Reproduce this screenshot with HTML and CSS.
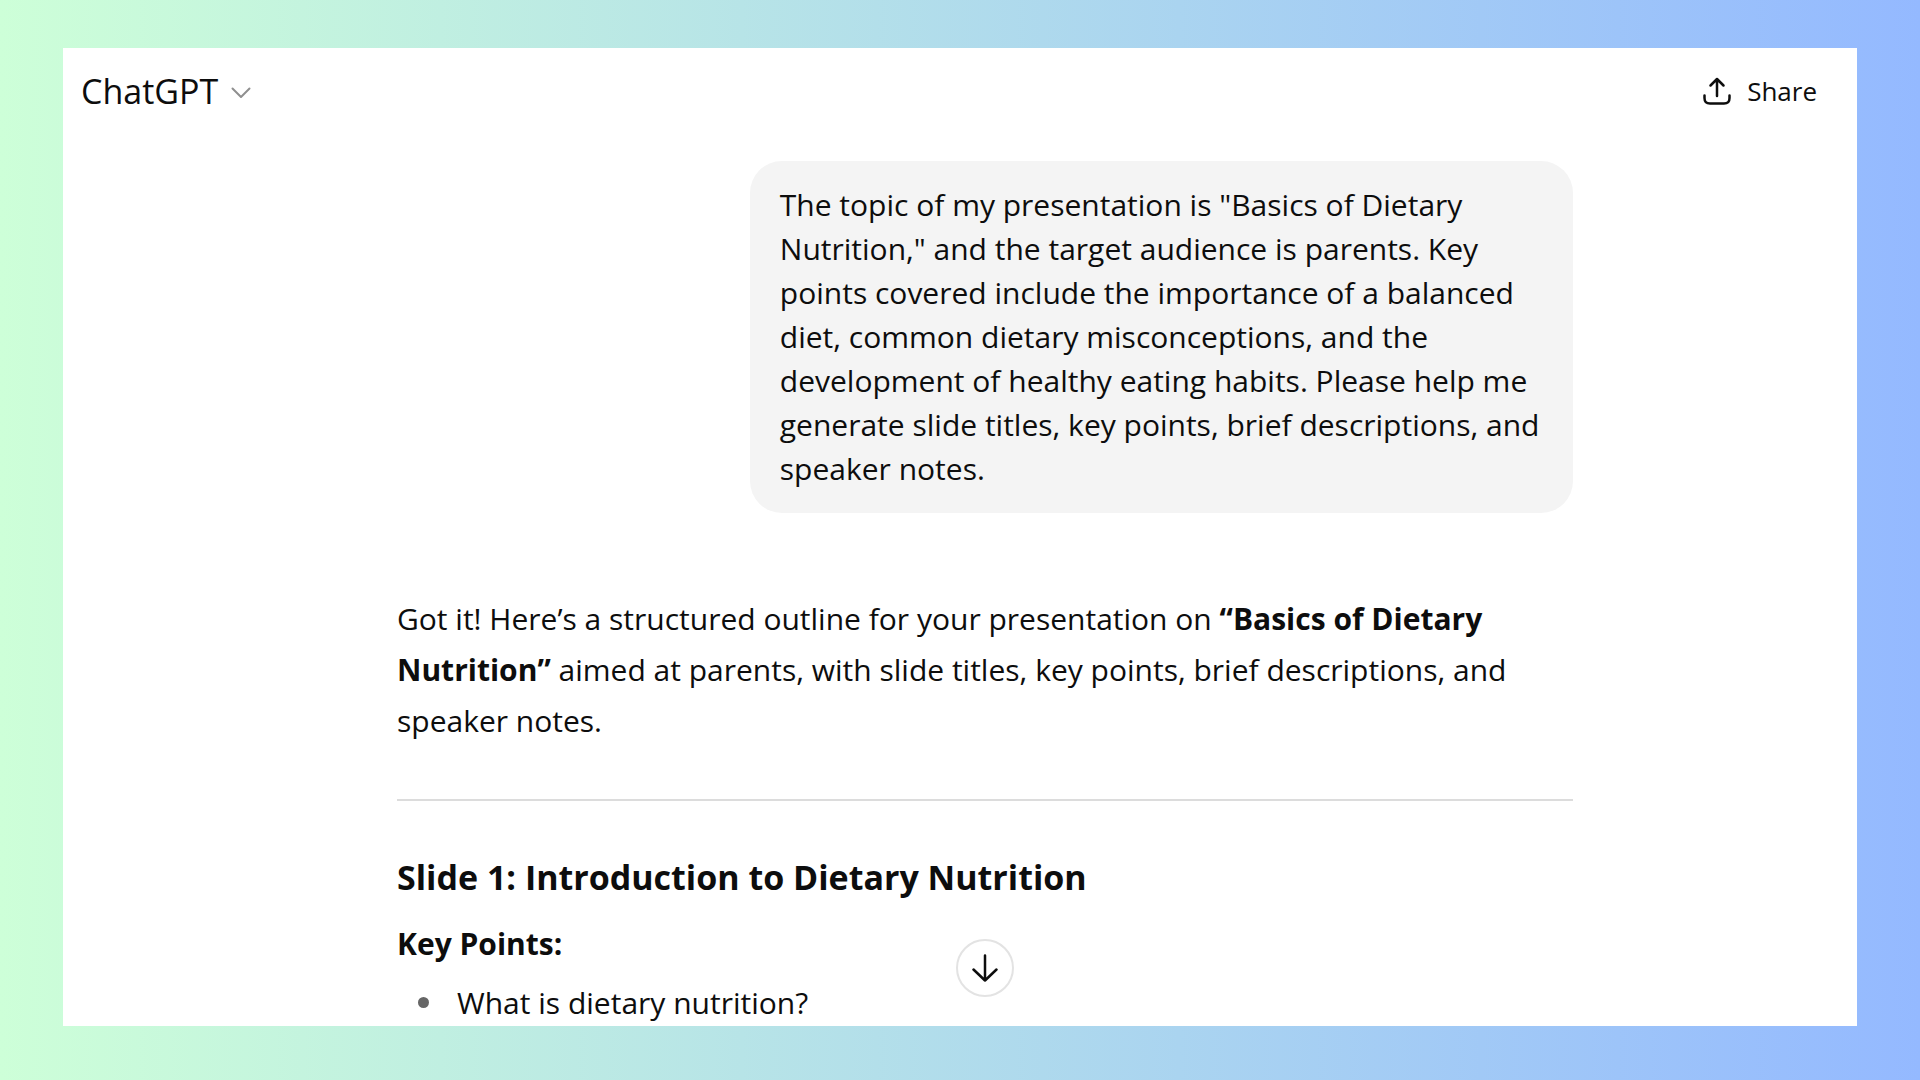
FILE: index.html
```
<!DOCTYPE html>
<html lang="en">
<head>
    <meta charset="UTF-8">
    <meta name="viewport" content="width=device-width, initial-scale=1.0">
    <title>ChatGPT</title>
    <link rel="stylesheet" href="styles.css">
</head>
<body>
    <div class="chat-window">
        <header class="chat-header">
            <button class="model-button" type="button">
                ChatGPT
                <svg class="chevron" viewBox="0 0 20 12" aria-hidden="true">
                    <path d="M1.5 1.5 L10 10 L18.5 1.5"/>
                </svg>
            </button>
            <button class="share-button" type="button">
                <svg class="share-icon" viewBox="0 0 28 28" aria-hidden="true">
                    <path d="M14 19 V2 M7.5 8.5 L14 2 L20.5 8.5"/>
                    <path d="M1.5 18.5 V21 C1.5 25 3 26.5 7 26.5 H21 C25 26.5 26.5 25 26.5 21 V18.5"/>
                </svg>
                Share
            </button>
        </header>

        <main class="conversation">
            <div class="thread">
                <div class="user-message">
                    The topic of my presentation is "Basics of Dietary Nutrition," and the target audience is parents. Key points covered include the importance of a balanced diet, common dietary misconceptions, and the development of healthy eating habits. Please help me generate slide titles, key points, brief descriptions, and speaker notes.
                </div>

                <article class="assistant-message">
                    <p>Got it! Here’s a structured outline for your presentation on <strong>“Basics of Dietary Nutrition”</strong> aimed at parents, with slide titles, key points, brief descriptions, and speaker notes.</p>
                    <hr>
                    <h3>Slide 1: Introduction to Dietary Nutrition</h3>
                    <h4>Key Points:</h4>
                    <ul>
                        <li>What is dietary nutrition?</li>
                    </ul>
                </article>
            </div>

            <button class="scroll-button" type="button" aria-label="Scroll to bottom">
                <svg viewBox="0 0 28 28" aria-hidden="true">
                    <path d="M14 1.5 V26.5 M2.5 15.5 L14 26.5 L25.5 15.5"/>
                </svg>
            </button>
        </main>
    </div>
</body>
</html>
```
FILE: styles.css
```
* {
    box-sizing: border-box;
    margin: 0;
    padding: 0;
}

body {
    height: 100vh;
    padding: 48px 63px 54px;
    background: linear-gradient(90deg, #cdffd8, #94b9ff);
    font-family: "Segoe UI", "Open Sans", sans-serif;
    font-size: 30px;
    color: #0d0d0d;
}

button {
    display: flex;
    align-items: center;
    border: none;
    background: none;
    font-family: inherit;
    color: inherit;
    cursor: pointer;
}

svg {
    fill: none;
    stroke: currentColor;
    stroke-linecap: round;
    stroke-linejoin: round;
}

.chat-window {
    display: flex;
    flex-direction: column;
    height: 100%;
    background: white;
    overflow: hidden;
}

/* Header */

.chat-header {
    display: flex;
    align-items: center;
    justify-content: space-between;
    height: 86px;
    padding: 0 40px 0 18px;
    flex-shrink: 0;
}

.model-button {
    gap: 13px;
    font-size: 34px;
}

.chevron {
    width: 20px;
    height: 12px;
    margin-top: 4px;
    stroke: #8f8f8f;
    stroke-width: 2;
}

.share-button {
    gap: 16px;
    font-size: 26px;
}

.share-icon {
    width: 28px;
    height: 28px;
    stroke-width: 2.5;
}

/* Conversation */

.conversation {
    position: relative;
    flex: 1;
    min-height: 0;
    padding: 27px 0 0 50px;
    overflow: hidden;
}

.thread {
    display: flex;
    flex-direction: column;
    gap: 80px;
    max-width: 1176px;
    margin: 0 auto;
}

.user-message {
    align-self: flex-end;
    max-width: 70%;
    padding: 22px 30px;
    border-radius: 32px;
    background: #f4f4f4;
    line-height: 44px;
}

.assistant-message {
    line-height: 51px;
}

.assistant-message hr {
    margin: 53px 0 51px;
    border: none;
    border-top: 2px solid #dcdcdc;
}

.assistant-message h3 {
    margin-bottom: 15px;
    font-size: 34px;
}

.assistant-message h4 {
    margin-bottom: 8px;
    font-size: 30px;
}

.assistant-message ul {
    list-style: none;
}

.assistant-message li {
    display: flex;
    align-items: center;
    gap: 28px;
    padding-left: 21px;
}

.assistant-message li::before {
    content: "";
    width: 11px;
    height: 11px;
    border-radius: 50%;
    background: #666;
}

.scroll-button {
    position: absolute;
    bottom: 29px;
    left: calc(50% + 25px);
    justify-content: center;
    width: 58px;
    height: 58px;
    border: 2px solid #e3e3e3;
    border-radius: 50%;
    background: white;
    transform: translateX(-50%);
}

.scroll-button svg {
    width: 28px;
    height: 28px;
    stroke-width: 2.5;
}
```
